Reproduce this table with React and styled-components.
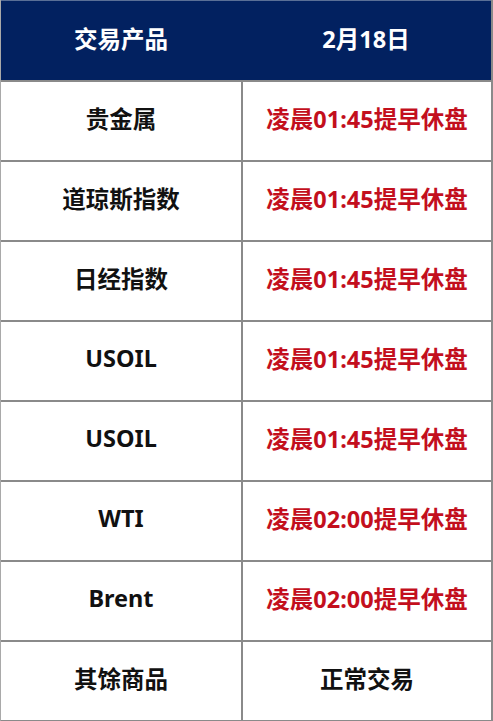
import React from "react";
import styled, { createGlobalStyle } from "styled-components";

const rows = [
  { name: "贵金属", time: "凌晨01:45提早休盘", alert: true },
  { name: "道琼斯指数", time: "凌晨01:45提早休盘", alert: true },
  { name: "日经指数", time: "凌晨01:45提早休盘", alert: true },
  { name: "USOIL", time: "凌晨01:45提早休盘", alert: true },
  { name: "USOIL", time: "凌晨01:45提早休盘", alert: true },
  { name: "WTI", time: "凌晨02:00提早休盘", alert: true },
  { name: "Brent", time: "凌晨02:00提早休盘", alert: true },
  { name: "其馀商品", time: "正常交易", alert: false },
];

const GlobalStyle = createGlobalStyle`
  html, body {
    margin: 0;
    padding: 0;
    background: #ffffff;
  }
  body {
    font-family: "Noto Sans", "Noto Sans CJK SC", sans-serif;
  }
`;

const Table = styled.div`
  width: 493px;
  box-sizing: border-box;
  display: grid;
  grid-template-columns: 240px 1fr;
  border-left: 1px solid #a9a9a9;
  border-right: 2px solid #8a8a8a;
  border-bottom: 2px solid #8a8a8a;
`;

const HeadCell = styled.div`
  height: 80px;
  box-sizing: border-box;
  padding-bottom: 6px;
  background: #022160;
  color: #ffffff;
  display: flex;
  align-items: center;
  justify-content: center;
  font-size: 23.5px;
  font-weight: 700;
  border-top: 1px solid #5a6f96;
`;

const Cell = styled.div`
  height: 80px;
  box-sizing: border-box;
  padding-bottom: 6px;
  border-top: 2px solid #8a8a8a;
  border-left: ${(p) => (p.$right ? "2px solid #8a8a8a" : "none")};
  display: flex;
  align-items: center;
  justify-content: center;
  font-size: 23.5px;
  font-weight: 700;
  color: ${(p) => (p.$alert ? "#c30f1d" : "#111111")};
`;

export default function App() {
  return (
    <>
      <GlobalStyle />
      <Table>
        <HeadCell>交易产品</HeadCell>
        <HeadCell>2月18日</HeadCell>
        {rows.map((r, i) => (
          <React.Fragment key={i}>
            <Cell>{r.name}</Cell>
            <Cell $right $alert={r.alert}>
              {r.time}
            </Cell>
          </React.Fragment>
        ))}
      </Table>
    </>
  );
}
